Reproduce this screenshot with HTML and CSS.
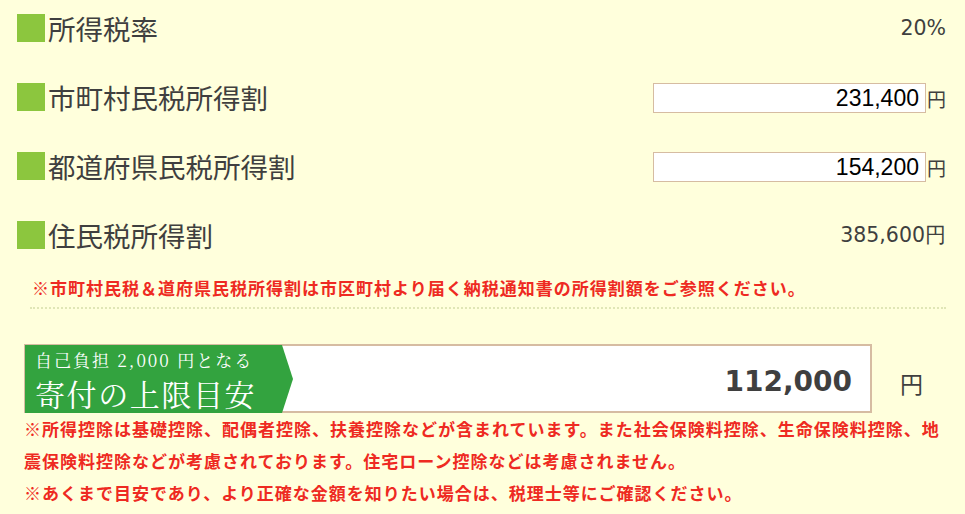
FILE: index.html
```html
<!DOCTYPE html>
<html lang="ja">
<head>
    <meta charset="UTF-8">
    <meta name="viewport" content="width=device-width, initial-scale=1.0">
    <title>寄付の上限目安</title>
    <link rel="stylesheet" href="styles.css">
</head>
<body>
    <div class="calc">
        <div class="row">
            <div class="label"><span class="mark"></span>所得税率</div>
            <div class="value">20%</div>
        </div>
        <div class="row">
            <div class="label"><span class="mark"></span>市町村民税所得割</div>
            <div class="field"><input type="text" class="amount-input" value="231,400" readonly><span class="unit">円</span></div>
        </div>
        <div class="row">
            <div class="label"><span class="mark"></span>都道府県民税所得割</div>
            <div class="field"><input type="text" class="amount-input" value="154,200" readonly><span class="unit">円</span></div>
        </div>
        <div class="row">
            <div class="label"><span class="mark"></span>住民税所得割</div>
            <div class="value">385,600円</div>
        </div>
        <p class="note">※市町村民税＆道府県民税所得割は市区町村より届く納税通知書の所得割額をご参照ください。</p>
        <hr class="dots">

        <div class="result">
            <div class="result-box">
                <div class="result-label">
                    <span class="result-sub">自己負担 2,000 円となる</span>
                    <span class="result-title">寄付の上限目安</span>
                </div>
                <div class="result-amount">112,000</div>
            </div>
            <span class="result-unit">円</span>
        </div>
        <div class="notes">
            <p>※所得控除は基礎控除、配偶者控除、扶養控除などが含まれています。また社会保険料控除、生命保険料控除、地震保険料控除などが考慮されております。住宅ローン控除などは考慮されません。</p>
            <p>※あくまで目安であり、より正確な金額を知りたい場合は、税理士等にご確認ください。</p>
        </div>
    </div>
</body>
</html>
```

FILE: styles.css
```css
body {
    margin: 0;
    background-color: #ffffdc;
    font-family: "Noto Sans CJK JP", sans-serif;
    color: #3f3f3f;
}
.calc {
    padding: 14px 19px 0 17px;
}
.row {
    display: flex;
    justify-content: space-between;
    align-items: center;
    height: 28px;
    margin-bottom: 41px;
}
.label {
    display: flex;
    align-items: center;
    font-size: 27.5px;
    line-height: 28px;
}
.mark {
    width: 28px;
    height: 28px;
    background-color: #8cc63e;
    margin-right: 3px;
}
.value {
    font-family: "DejaVu Sans", sans-serif;
    font-size: 20.5px;
}
.value, .unit {
    color: #3f3f3f;
}
.field {
    display: flex;
    align-items: center;
    padding-top: 2px;
}
.amount-input {
    width: 273px;
    height: 30px;
    box-sizing: border-box;
    border: 1px solid #d6bca2;
    background-color: #fff;
    text-align: right;
    padding: 0 6px 0 0;
    font-family: "Liberation Sans", sans-serif;
    font-size: 23px;
    color: #000;
}
.unit {
    font-size: 19px;
    margin-left: 1px;
}
.note {
    margin: -14px 0 0 15px;
    font-size: 17px;
    font-weight: bold;
    letter-spacing: 1px;
    line-height: 24px;
    color: #ee2a22;
}
.dots {
    margin: 7px 0 0 13px;
    border: none;
    border-top: 2px dotted #e0e6b6;
}
.result {
    display: flex;
    align-items: center;
    margin: 35px 0 0 7px;
}
.result-box {
    display: flex;
    width: 848px;
    height: 69px;
    box-sizing: border-box;
    border: 2px solid #d6bca2;
    border-left-width: 1px;
    background-color: #fff;
}
.result-label {
    display: flex;
    flex-direction: column;
    width: 268px;
    margin: -1px 0 -2px 0;
    padding: 2px 0 0 10px;
    box-sizing: border-box;
    background-color: #33a33f;
    color: #fff;
    font-family: "Noto Serif CJK JP", "Liberation Serif", serif;
    clip-path: polygon(0 0, 257px 0, 268px 50%, 257px 100%, 0 100%);
}
.result-sub {
    font-size: 17px;
    letter-spacing: 2px;
    line-height: normal;
}
.result-title {
    font-size: 30px;
    letter-spacing: 1.6px;
    line-height: normal;
    margin-top: -1px;
}
.result-amount {
    flex: 1;
    text-align: right;
    align-self: center;
    padding: 6px 18px 0 0;
    font-family: "DejaVu Sans", sans-serif;
    font-weight: bold;
    font-size: 28px;
    color: #3f3f3f;
}
.result-unit {
    margin-left: 28px;
    padding-top: 8px;
    font-size: 23px;
}
.notes {
    margin-left: 7px;
    width: 925px;
}
.notes p {
    margin: 0;
    font-size: 17px;
    font-weight: bold;
    letter-spacing: 1px;
    line-height: 32px;
    color: #ee2a22;
}
```
